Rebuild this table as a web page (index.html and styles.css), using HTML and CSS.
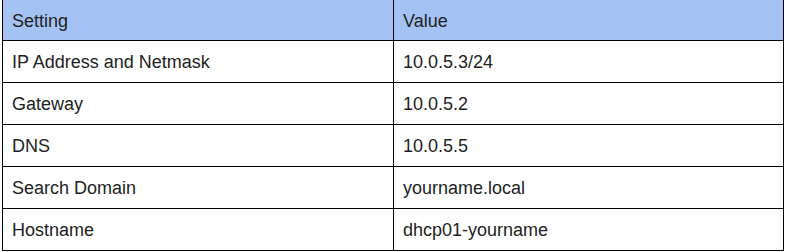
FILE: index.html
```html
<!DOCTYPE html>
<html>
<head>
<meta charset="utf-8">
<link rel="stylesheet" href="styles.css">
</head>
<body>
<table class="settings">
  <colgroup>
    <col class="col-setting">
    <col class="col-value">
  </colgroup>
  <thead>
    <tr class="head-row">
      <th>Setting</th>
      <th>Value</th>
    </tr>
  </thead>
  <tbody>
    <tr><td>IP Address and Netmask</td><td>10.0.5.3/24</td></tr>
    <tr><td>Gateway</td><td>10.0.5.2</td></tr>
    <tr><td>DNS</td><td>10.0.5.5</td></tr>
    <tr><td>Search Domain</td><td>yourname.local</td></tr>
    <tr><td>Hostname</td><td>dhcp01-yourname</td></tr>
  </tbody>
</table>
</body>
</html>
```
FILE: styles.css
```css
html, body {
  margin: 0;
  padding: 0;
  background: #ffffff;
}

body {
  font-family: "Liberation Sans", Arial, sans-serif;
  font-size: 18px;
  color: #222222;
}

.settings {
  margin: -1px 0 0 2px;
  width: 782px;
  table-layout: fixed;
  border-collapse: separate;
  border-spacing: 0;
  border-top: 1px solid #000;
  border-left: 1px solid #000;
}

.col-setting { width: 391px; }
.col-value { width: 390px; }

.settings th,
.settings td {
  border-right: 1px solid #000;
  border-bottom: 1px solid #000;
  padding: 2px 9px 0 9px;
  text-align: left;
  font-weight: normal;
  vertical-align: middle;
  line-height: 21px;
  white-space: nowrap;
}

.settings th {
  background: #a4c2f4;
  height: 38px;
}

.settings td {
  height: 39px;
}
```
